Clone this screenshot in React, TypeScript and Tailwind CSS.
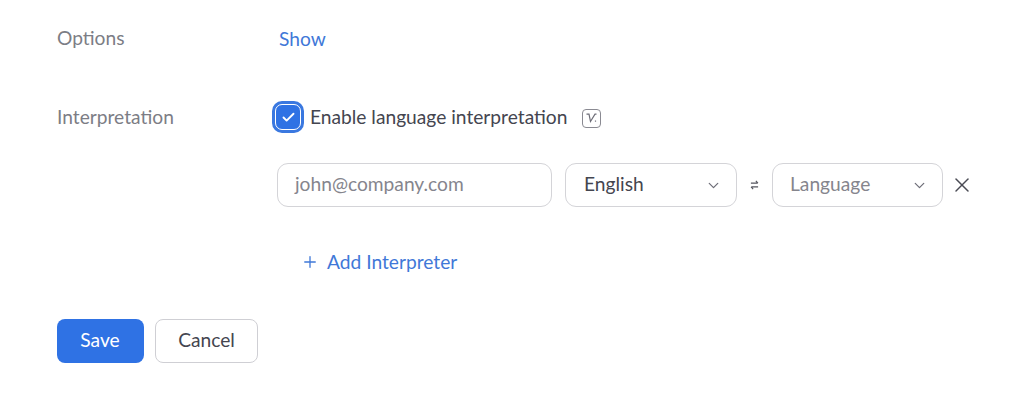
import React from 'react';
import { Check, ChevronDown, Plus, X } from 'lucide-react';

function LangSelect({ label, muted, width }: { label: string; muted?: boolean; width: string }) {
    return (
        <div className={`${width} h-[44px] flex items-center justify-between ${muted ? 'pl-[17px]' : 'pl-[18px]'} pr-[14px] bg-white border-[1.5px] border-[#d4d4d8] rounded-[11px]`}>
            <span className={`text-[19.2px] leading-[26px] -mt-[3px] ${muted ? 'text-[#85858d]' : 'text-[#44454f]'}`}>{label}</span>
            <ChevronDown className="w-[17px] h-[17px] text-[#6e6e78]" strokeWidth={1.75} />
        </div>
    );
}

export default function App() {
    return (
        <div className="w-[1024px] h-[400px] bg-white overflow-hidden pl-[57px] font-['Lato',sans-serif]">
            {/* Options */}
            <div className="flex items-center pt-[25px] h-[53px]">
                <div className="w-[220px] text-[19.2px] text-[#7c7d85] leading-[26px] -mt-[3px]">Options</div>
                <a className="text-[19.2px] text-[#3f78d8] leading-[26px] ml-[2px] -mt-[1px]">Show</a>
            </div>

            {/* Interpretation */}
            <div className="flex mt-[50px]">
                <div className="w-[220px] text-[19.2px] text-[#7c7d85] leading-[28px]">Interpretation</div>
                <div className="flex flex-col">
                    <div className="flex items-center h-[28px]">
                        <div className="w-[26px] h-[26px] bg-[#2f72e4] rounded-[7px] flex items-center justify-center ring-[3px] ring-[#3a78e0] border-[1.5px] border-white -ml-[2px]">
                            <Check className="w-[15px] h-[15px] text-white" strokeWidth={3} />
                        </div>
                        <span className="ml-[9px] text-[19.2px] text-[#44454f]">Enable language interpretation</span>
                        <div className="ml-[15px] w-[19px] h-[19px] border-[1.5px] border-[#8a8a92] rounded-[4px] flex items-center justify-center mt-[2px]">
                            <svg width="13" height="12" viewBox="0 0 13 12" fill="none" stroke="#6e6e78" strokeWidth="1.2">
                                <path d="M1.5 2.2 H4 L5.5 9.5 L10 2.2 H11.5" />
                                <path d="M10.5 8.5 v1.2" />
                            </svg>
                        </div>
                    </div>

                    <div className="flex items-center mt-[32px]">
                        <div className="w-[275px] h-[44px] flex items-center px-[17px] bg-white border-[1.5px] border-[#d4d4d8] rounded-[11px]">
                            <span className="text-[19.2px] leading-[26px] -mt-[3px] text-[#85858d]">john@company.com</span>
                        </div>
                        <div className="ml-[13px]">
                            <LangSelect label="English" width="w-[172px]" />
                        </div>
                        <div className="w-[35px] flex justify-center">
                            <svg width="9" height="10" viewBox="0 0 10 11" fill="none" stroke="#55565f" strokeWidth="1.3">
                                <path d="M1 3.5 H8.5 M6.5 1 L8.8 3.5" />
                                <path d="M9 7.5 H1.5 M3.5 10 L1.2 7.5" />
                            </svg>
                        </div>
                        <LangSelect label="Language" muted width="w-[171px]" />
                        <X className="ml-[7px] w-[24px] h-[24px] text-[#4a4b54]" strokeWidth={1.5} />
                    </div>

                    <div className="flex items-center mt-[42px] ml-[24px] text-[#3f78d8] h-[26px]">
                        <Plus className="w-[18px] h-[18px]" strokeWidth={1.75} />
                        <span className="ml-[8px] text-[19.2px] leading-[26px] -mt-[1px]">Add Interpreter</span>
                    </div>
                </div>
            </div>

            {/* Actions */}
            <div className="flex gap-[11px] mt-[44px]">
                <button className="w-[87px] h-[44px] bg-[#2f72e4] rounded-[8px] text-white text-[19.2px] leading-[26px] pb-[3px] pr-[1px]">Save</button>
                <button className="w-[103px] h-[44px] bg-white border-[1.5px] border-[#cfcfd4] rounded-[8px] text-[#44454f] text-[19.2px] leading-[26px] pb-[3px]">Cancel</button>
            </div>
        </div>
    );
}
